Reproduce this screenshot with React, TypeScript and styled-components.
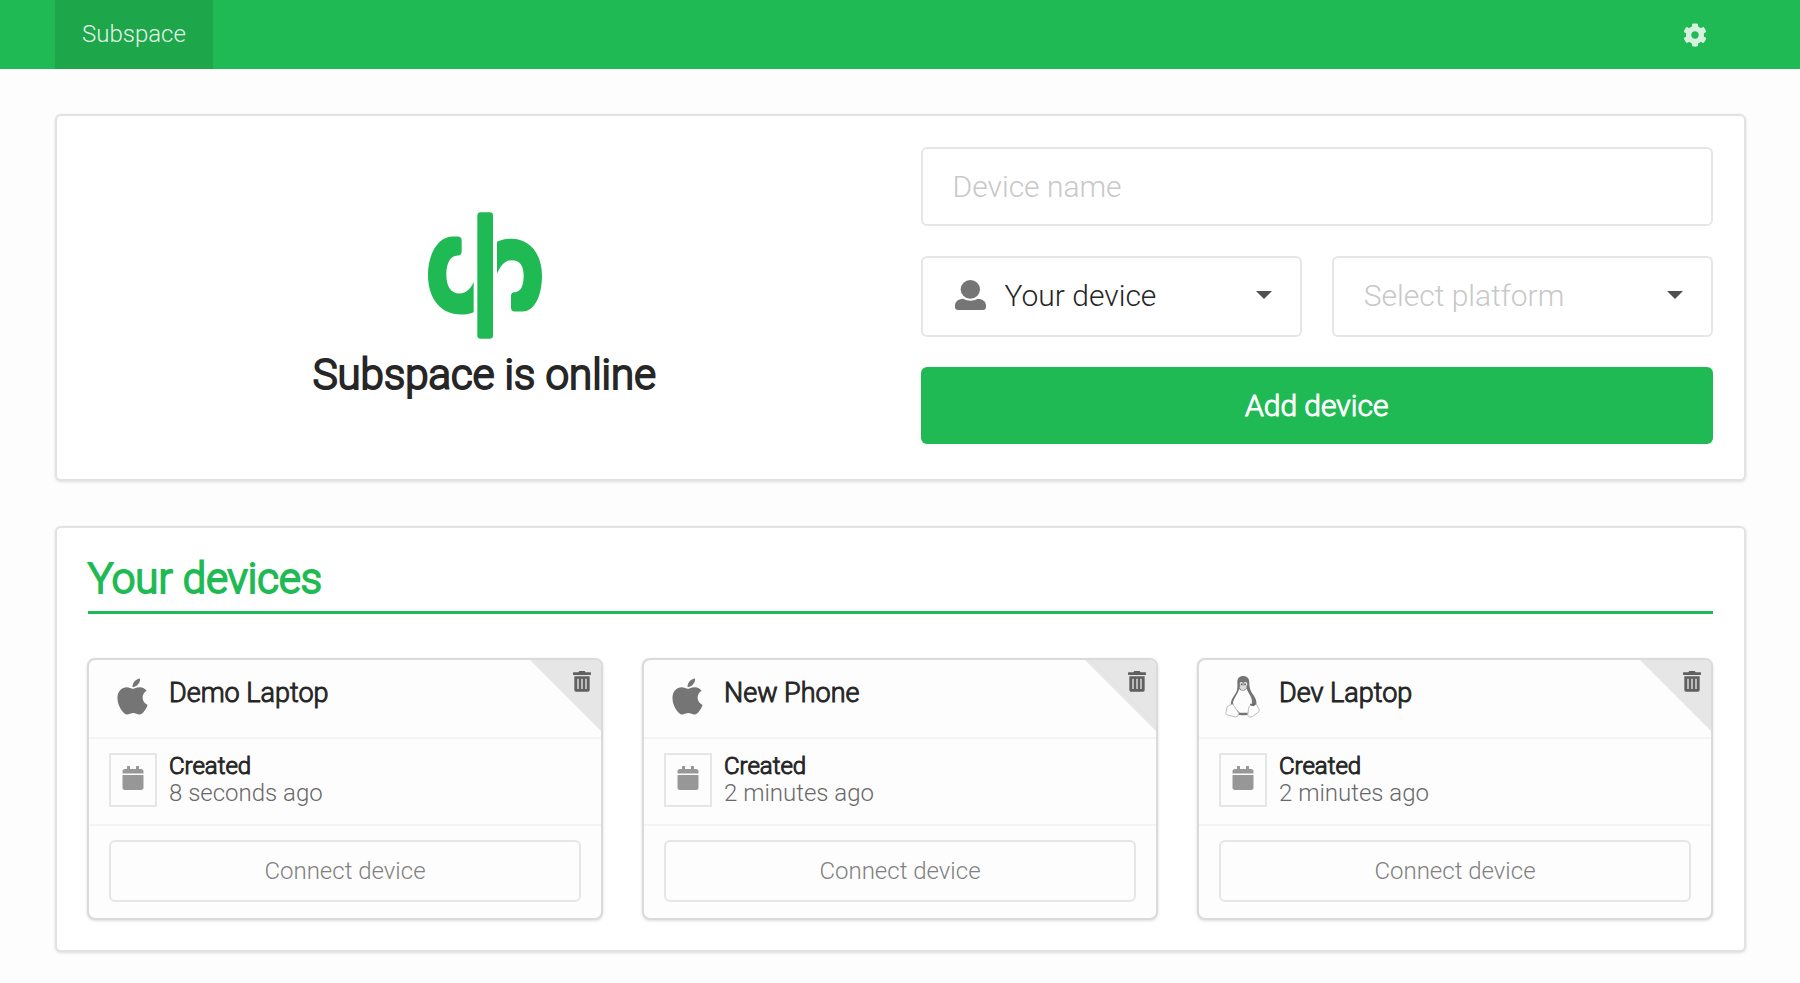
import React from "react";
import styled, { createGlobalStyle } from "styled-components";
import { FaApple, FaCalendar, FaCog } from "react-icons/fa";

const GlobalStyle = createGlobalStyle`
  *, *::before, *::after { box-sizing: border-box; }
  body {
    margin: 0;
    background: #fdfdfd;
    color: #262626;
    font-family: Roboto, "Liberation Sans", sans-serif;
    font-weight: 300;
  }
  button, input, select { font: inherit; color: inherit; margin: 0; }
  h1, h2, h3, p { margin: 0; font-weight: 300; }
`;

const green = "#1fba54";

const TopBar = styled.header`
  background: ${green};
  padding: 0 54px 0 55px;
`;

const Nav = styled.nav`
  display: flex;
  justify-content: space-between;
  height: 69px;
`;

const Brand = styled.a`
  display: flex;
  align-items: center;
  padding: 0 27px 2px;
  background: #1ea64b;
  color: rgba(255, 255, 255, 0.9);
  font-size: 24px;
  line-height: 28px;
  text-decoration: none;
`;

const SettingsButton = styled.button`
  display: flex;
  align-items: center;
  justify-content: center;
  width: 102px;
  padding: 0;
  border: 0;
  background: none;
  font-size: 24px;
  cursor: pointer;
  && { color: #d6f2df; }
`;

const Page = styled.main`
  display: flex;
  flex-direction: column;
  gap: 45px;
  padding: 45px 54px 30px 55px;
`;

const Segment = styled.section`
  padding: 31px 31px 30px;
  background: #fff;
  border: 2px solid #e2e2e3;
  border-radius: 6px;
  box-shadow: 0 1px 3px rgba(34, 36, 38, 0.15);
`;

const AddSegment = styled(Segment)`
  display: grid;
  grid-template-columns: 1fr 1fr;
  gap: 40px;
  padding-bottom: 35px;
`;

const Status = styled.div`
  display: flex;
  flex-direction: column;
  align-items: center;
  padding-top: 65px;
`;

const StatusTitle = styled.h1`
  margin-top: 10px;
  font-size: 42px;
  line-height: 52px;
  -webkit-text-stroke: 2px currentColor;
`;

const Form = styled.form`
  display: flex;
  flex-direction: column;
  gap: 30px;
`;

const FieldRow = styled.div`
  display: grid;
  grid-template-columns: 1fr 1fr;
  gap: 30px;
`;

const TextInput = styled.input`
  width: 100%;
  height: 79px;
  padding: 0 30px 1px;
  border: 2px solid #e6e6e6;
  border-radius: 6px;
  background: #fff;
  font-size: 30px;
  outline: 0;
  &::placeholder { color: #c8c8c8; opacity: 1; }
`;

const SelectField = styled.div`
  position: relative;
  color: #757575;
`;

const Select = styled.select<{ $icon?: boolean; $empty?: boolean }>`
  display: block;
  appearance: none;
  width: 100%;
  height: 81px;
  padding: 0 60px 3px ${(p) => (p.$icon ? 82 : 30)}px;
  border: 2px solid #e6e6e6;
  border-radius: 6px;
  background: #fff;
  font-size: 30px;
  outline: 0;
  && { color: ${(p) => (p.$empty ? "#c8c8c8" : "#262626")}; }
`;

const FieldIcon = styled.span`
  position: absolute;
  left: 34px;
  top: 24px;
  pointer-events: none;
  svg { display: block; }
`;

const Caret = styled.span`
  position: absolute;
  right: 30px;
  top: 35px;
  border: solid transparent;
  border-width: 8px 8px 0;
  border-top-color: #505050;
  pointer-events: none;
`;

const AddButton = styled.button`
  height: 77px;
  padding: 0;
  border: 0;
  border-radius: 6px;
  background: ${green};
  font-size: 30px;
  cursor: pointer;
  -webkit-text-stroke: 1px currentColor;
  && { color: #fff; }
`;

const SectionTitle = styled.h2`
  padding-bottom: 12px;
  border-bottom: 3px solid ${green};
  color: ${green};
  font-size: 42px;
  line-height: 40px;
  -webkit-text-stroke: 2px currentColor;
`;

const DeviceList = styled.div`
  display: grid;
  grid-template-columns: repeat(3, 1fr);
  gap: 39px;
  margin: 44px 0 0 -1px;
`;

const DeviceCard = styled.article`
  position: relative;
  overflow: hidden;
  background: #fdfdfd;
  border: 2px solid #dadadb;
  border-radius: 8px;
  box-shadow: 0 1px 3px rgba(34, 36, 38, 0.15);
`;

const CardHeader = styled.div`
  display: flex;
  gap: 14px;
  height: 77px;
  padding: 14px 20px 0;
`;

const PlatformIcon = styled.span`
  display: flex;
  justify-content: center;
  width: 46px;
  padding-top: 2px;
  color: #757575;
  svg { display: block; }
`;

const DeviceName = styled.h3`
  font-size: 27px;
  line-height: 38px;
  -webkit-text-stroke: 1px currentColor;
`;

const CardBody = styled.div`
  display: flex;
  gap: 12px;
  height: 87px;
  padding: 14px 20px 0;
  border-top: 2px solid #f4f4f4;
`;

const CalendarBox = styled.span`
  display: flex;
  justify-content: center;
  width: 48px;
  height: 54px;
  padding-top: 11px;
  border: 2px solid #e6e6e6;
  color: #979797;
  font-size: 24px;
`;

const Created = styled.div`
  font-size: 24px;
  line-height: 27px;
`;

const CreatedLabel = styled.p`
  -webkit-text-stroke: 1px currentColor;
`;

const CreatedTime = styled.p`
  color: #686868;
`;

const CardFooter = styled.div`
  padding: 14px 20px 16px;
  border-top: 2px solid #f4f4f4;
`;

const ConnectButton = styled.button`
  display: block;
  width: 100%;
  height: 62px;
  padding: 0;
  border: 2px solid #e6e6e6;
  border-radius: 6px;
  background: none;
  font-size: 24px;
  cursor: pointer;
  && { color: #808080; }
`;

const DeleteButton = styled.button`
  position: absolute;
  top: 0;
  right: 0;
  display: flex;
  align-items: flex-start;
  justify-content: flex-end;
  width: 71px;
  height: 71px;
  padding: 11px 10px 0 0;
  border: 0;
  background: #e6e6e6;
  clip-path: polygon(0 0, 100% 0, 100% 100%);
  cursor: pointer;
  && { color: #606060; }
`;

const Logo = () => (
  <svg width="116" height="127" viewBox="408 67 348 380" fill={green} aria-hidden="true">
    <rect x="562" y="67" width="47" height="380" rx="10" />
    <path d="M489 140H503q12 0 12 12V185q0 12-12 12C480 197 469 222 469 254C469 288 482 311 508 311C530 311 543 296 551 276V367C540 372 528 374 513 374C450 374 414 325 414 255C414 190 445 140 489 140Z" />
    <path d="M621 156C635 150 648 147 664 147C722 147 756 195 756 258C756 315 735 365 698 365H674q-11 0-11-11V318q0-11 11-11C694 307 701 285 701 258C701 228 690 211 665 211C642 211 630 232 621 252Z" />
  </svg>
);

const UserIcon = () => (
  <svg width="31" height="30" viewBox="0 0 93 90" fill="currentColor" aria-hidden="true">
    <ellipse cx="46" cy="28" rx="29" ry="28" />
    <path d="M24 56Q46 68 69 56C84 57 93 65 93 77V81Q93 90 84 90H9Q0 90 0 81V77C0 65 9 57 24 56Z" />
  </svg>
);

const TrashIcon = () => (
  <svg width="18" height="21" viewBox="0 0 54 63" fill="currentColor" aria-hidden="true">
    <path d="M2 4H16L19 0H35L38 4H52Q54 4 54 6V10Q54 12 52 12H2Q0 12 0 10V6Q0 4 2 4Z" />
    <path
      fillRule="evenodd"
      d="M4 16H50V57Q50 62 45 62H9Q4 62 4 57ZM13 23V54H17V23ZM25 23V54H29V23ZM37 23V54H41V23Z"
    />
  </svg>
);

const TuxIcon = () => (
  <svg width="35" height="42" viewBox="138 109 105 126" aria-hidden="true">
    <path
      d="M175 130C174 116 181 109 193 109C205 109 212 118 211 131C211 148 216 156 225 169C232 180 235 190 230 203L212 223C200 229 182 228 174 222L155 196C155 184 160 176 168 164C175 154 176 147 175 130Z"
      fill="#747474"
    />
    <path
      d="M181 147C184 155 200 155 203 146C205 156 213 165 217 175C221 187 218 200 211 207L207 219H182C172 208 161 199 162 187C166 173 177 162 181 147Z"
      fill="#fdfdfd"
    />
    <ellipse cx="187" cy="133" rx="5" ry="6" fill="#eee" />
    <ellipse cx="199" cy="133" rx="6" ry="6" fill="#eee" />
    <circle cx="188" cy="134" r="3" fill="#666" />
    <circle cx="198" cy="134" r="3" fill="#666" />
    <path d="M181 141Q192 132 204 141Q200 151 192 152Q184 151 181 141Z" fill="#dcdcdc" />
    <path
      d="M144 202L156 194Q161 192 165 199L179 220Q180 231 169 232L142 225Q139 221 142 214ZM216 196Q222 203 232 193L241 211Q242 215 237 218L220 231Q209 234 206 228L209 205Q210 198 216 196Z"
      fill="#fdfdfd"
      stroke="#bdbdbd"
      strokeWidth="3"
    />
    <path d="M214 193Q220 200 229 193" fill="none" stroke="#606060" strokeWidth="4" />
  </svg>
);

type Device = { name: string; created: string; platform: "apple" | "linux" };

const devices: Device[] = [
  { name: "Demo Laptop", created: "8 seconds ago", platform: "apple" },
  { name: "New Phone", created: "2 minutes ago", platform: "apple" },
  { name: "Dev Laptop", created: "2 minutes ago", platform: "linux" },
];

const DeviceItem = ({ device }: { device: Device }) => (
  <DeviceCard>
    <CardHeader>
      <PlatformIcon>{device.platform === "apple" ? <FaApple size={41} /> : <TuxIcon />}</PlatformIcon>
      <DeviceName>{device.name}</DeviceName>
    </CardHeader>
    <DeleteButton type="button" aria-label={`Delete ${device.name}`}>
      <TrashIcon />
    </DeleteButton>
    <CardBody>
      <CalendarBox>
        <FaCalendar />
      </CalendarBox>
      <Created>
        <CreatedLabel>Created</CreatedLabel>
        <CreatedTime>{device.created}</CreatedTime>
      </Created>
    </CardBody>
    <CardFooter>
      <ConnectButton type="button">Connect device</ConnectButton>
    </CardFooter>
  </DeviceCard>
);

export default function App() {
  return (
    <>
      <GlobalStyle />
      <TopBar>
        <Nav>
          <Brand href="#">Subspace</Brand>
          <SettingsButton type="button" aria-label="Settings">
            <FaCog />
          </SettingsButton>
        </Nav>
      </TopBar>
      <Page>
        <AddSegment>
          <Status>
            <Logo />
            <StatusTitle>Subspace is online</StatusTitle>
          </Status>
          <Form onSubmit={(e) => e.preventDefault()}>
            <TextInput type="text" aria-label="Device name" placeholder="Device name" />
            <FieldRow>
              <SelectField>
                <Select $icon aria-label="Device owner" defaultValue="you">
                  <option value="you">Your device</option>
                </Select>
                <FieldIcon>
                  <UserIcon />
                </FieldIcon>
                <Caret />
              </SelectField>
              <SelectField>
                <Select $empty aria-label="Platform" defaultValue="">
                  <option value="">Select platform</option>
                </Select>
                <Caret />
              </SelectField>
            </FieldRow>
            <AddButton type="submit">Add device</AddButton>
          </Form>
        </AddSegment>
        <Segment>
          <SectionTitle>Your devices</SectionTitle>
          <DeviceList>
            {devices.map((device) => (
              <DeviceItem key={device.name} device={device} />
            ))}
          </DeviceList>
        </Segment>
      </Page>
    </>
  );
}
